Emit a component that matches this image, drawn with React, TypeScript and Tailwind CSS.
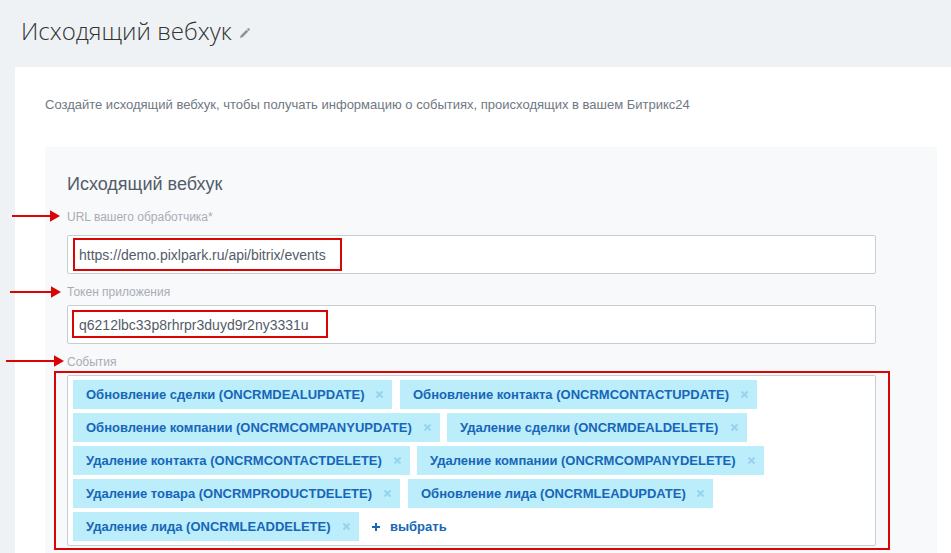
import type { ReactNode } from "react";

type Tag = { label: string; width: string; gap: string };

const rows: Tag[][] = [
  [
    { label: "Обновление сделки (ONCRMDEALUPDATE)", width: "w-[319px]", gap: "" },
    { label: "Обновление контакта (ONCRMCONTACTUPDATE)", width: "w-[357px]", gap: "ml-2" },
  ],
  [
    { label: "Обновление компании (ONCRMCOMPANYUPDATE)", width: "w-[367px]", gap: "" },
    { label: "Удаление сделки (ONCRMDEALDELETE)", width: "w-[300px]", gap: "ml-[7px]" },
  ],
  [
    { label: "Удаление контакта (ONCRMCONTACTDELETE)", width: "w-[337px]", gap: "" },
    { label: "Удаление компании (ONCRMCOMPANYDELETE)", width: "w-[347px]", gap: "ml-[7px]" },
  ],
  [
    { label: "Удаление товара (ONCRMPRODUCTDELETE)", width: "w-[327px]", gap: "" },
    { label: "Обновление лида (ONCRMLEADUPDATE)", width: "w-[305px]", gap: "ml-2" },
  ],
  [{ label: "Удаление лида (ONCRMLEADDELETE)", width: "w-[286px]", gap: "" }],
];

function Chip({ tag }: { tag: Tag }) {
  return (
    <span className={`flex h-[29px] shrink-0 items-center justify-between bg-[#bbedfb] pl-[13px] pr-[9px] ${tag.width} ${tag.gap}`}>
      <span>{tag.label}</span>
      <svg width="7" height="7" viewBox="0 0 7 7" stroke="#98d2ee" strokeWidth="2">
        <path d="M.5.5l6 6M6.500.5L.5 6.500" />
      </svg>
    </span>
  );
}

function Arrow({ length, place }: { length: number; place: string }) {
  return (
    <svg className={`absolute ${place}`} width={length} height="12" viewBox={`0 0 ${length} 12`} fill="#d90404">
      <path d={`M0 5h${length - 9}v2H0z`} />
      <path d={`M${length - 10} .3L${length} 6l-${10} 5.7z`} />
    </svg>
  );
}

function Field({ label, labelClass, children }: { label: string; labelClass: string; children: ReactNode }) {
  return (
    <div>
      <div className={`h-[31px] text-[12px] leading-[16px] text-[#a8adb4] ${labelClass}`}>{label}</div>
      {children}
    </div>
  );
}

export default function App() {
  return (
    <div className="relative flex h-[553px] w-[951px] flex-col overflow-hidden bg-[#eef2f4] font-['Liberation_Sans',Arial,sans-serif]">
      <header className="flex h-[67px] shrink-0 items-start pl-[21px] pt-[13px]">
        <h1 className="whitespace-nowrap font-['Open_Sans',sans-serif] text-[24px] font-light leading-[36px] text-[#333]">
          Исходящий вебхук
        </h1>
        <svg className="ml-[8px] mt-[15px]" width="10" height="10" viewBox="0 0 10 10" fill="#8b9299">
          <path d="M0 10l.7-2.600L6.400 1.700 8.300 3.600 2.600 9.300zM6.900 1.200L8 .2Q8.500-.1 9 .4l.6.6q.5.5.1 1L8.800 3.100z" />
        </svg>
      </header>
      <main className="ml-[15px] grow bg-white pl-[30px] pr-[14px]">
        <p className="h-[80px] whitespace-nowrap pt-[29px] text-[13px] leading-[18px] text-[#6f7883]">
          Создайте исходящий вебхук, чтобы получать информацию о событиях, происходящих в вашем Битрикс24
        </p>
        <section className="h-[420px] bg-[#f8f9fb] pl-[22px] pr-[61px] pt-[24px]">
          <h2 className="h-[33px] text-[18px] leading-[26px] text-[#535c69]">Исходящий вебхук</h2>
          <Field label="URL вашего обработчика*" labelClass="pt-[5px]">
            <div className="flex h-[39px] items-center rounded-[2px] border border-[#c6cdd3] bg-white pl-[11px] pt-[2px] text-[14px] text-[#535c69]">
              https://demo.pixlpark.ru/api/bitrix/events
            </div>
          </Field>
          <Field label="Токен приложения" labelClass="pt-[10px]">
            <div className="flex h-[39px] items-center rounded-[2px] border border-[#c6cdd3] bg-white pl-[11px] pt-[2px] text-[14px] text-[#535c69]">
              q6212lbc33p8rhrpr3duyd9r2ny3331u
            </div>
          </Field>
          <Field label="События" labelClass="pt-[10px]">
            <div className="flex h-[171px] flex-col gap-1 whitespace-nowrap rounded-[2px] border border-[#c6cdd3] bg-white pl-[5px] pt-1 text-[13px] font-bold text-[#1766b8]">
              {rows.map((row, i) => (
                <div key={i} className="flex items-center">
                  {row.map((tag) => (
                    <Chip key={tag.label} tag={tag} />
                  ))}
                  {i === 4 && (
                    <span className="ml-[13px] flex items-center gap-[10px]">
                      <svg width="8" height="8" viewBox="0 0 8 8" fill="#1766b8">
                        <path d="M3 0h2v3h3v2H5v3H3V5H0V3h3z" />
                      </svg>
                      <span>выбрать</span>
                    </span>
                  )}
                </div>
              ))}
            </div>
          </Field>
        </section>
      </main>
      <div className="absolute left-[73px] top-[238px] h-[33px] w-[269px] border-2 border-[#d90404]" />
      <div className="absolute left-[72px] top-[310px] h-[28px] w-[256px] border-2 border-[#d90404]" />
      <div className="absolute left-[54px] top-[371px] h-[179px] w-[836px] border-2 border-[#d90404]" />
      <Arrow length={48} place="left-[12px] top-[210px]" />
      <Arrow length={51} place="left-[10px] top-[286px]" />
      <Arrow length={58} place="left-[6px] top-[355px]" />
    </div>
  );
}
